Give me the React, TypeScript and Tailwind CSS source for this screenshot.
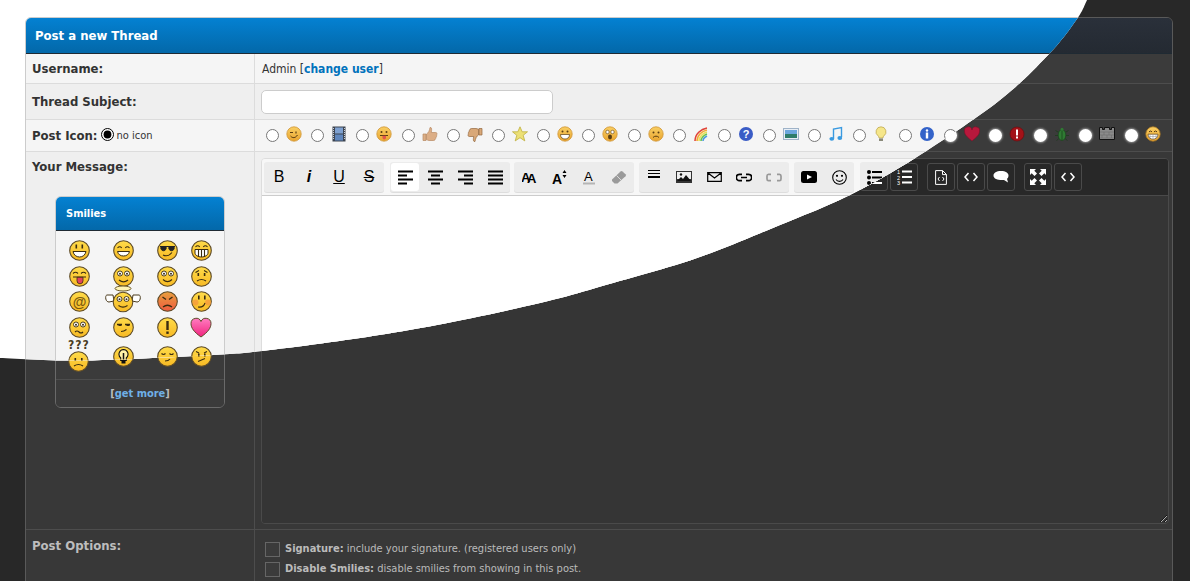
import type { ReactNode } from 'react';

const FONT = "[font-family:'DejaVu_Sans_Condensed','DejaVu_Sans',sans-serif]";

// sampled along the edge of the light part of the page
const EDGE: [number, number][] = [
  [1087, 0], [1077, 19], [1050, 53], [1000, 100], [920, 155], [850, 195], [780, 225], [697, 258],
  [613, 283], [540, 303], [437, 325], [353, 339], [262, 351], [220, 354.5], [120, 359.5], [60, 360.5], [0, 358],
];

function edgePolygon() {
  const pts: string[] = ['0px 0px'];
  for (let i = 0; i < EDGE.length - 1; i++) {
    const p0 = EDGE[Math.max(i - 1, 0)];
    const p1 = EDGE[i];
    const p2 = EDGE[i + 1];
    const p3 = EDGE[Math.min(i + 2, EDGE.length - 1)];
    for (let s = 0; s < 12; s++) {
      const t = s / 12;
      const c = (a: number, b: number, d: number, e: number) =>
        0.5 * (2 * b + (d - a) * t + (2 * a - 5 * b + 4 * d - e) * t * t + (3 * b - a - 3 * d + e) * t * t * t);
      pts.push(`${c(p0[0], p1[0], p2[0], p3[0]).toFixed(1)}px ${c(p0[1], p1[1], p2[1], p3[1]).toFixed(1)}px`);
    }
  }
  pts.push('0px 358px');
  return `polygon(${pts.join(',')})`;
}

/* ---------- post icons ---------- */

function Ic({ children }: { children: ReactNode }) {
  return <svg width="16" height="16" viewBox="0 0 16 16" className="block shrink-0">{children}</svg>;
}

function Tango({ children }: { children: ReactNode }) {
  return (
    <Ic>
      <circle cx="8" cy="8" r="7.2" fill="url(#tango)" stroke="#cf9636" strokeWidth="0.8" />
      {children}
    </Ic>
  );
}

const dot = (x: number, y: number, r = 1) => <circle cx={x} cy={y} r={r} fill="#5a3d12" />;

const POST_ICONS: ReactNode[] = [
  <Tango key="wink"><path d="M4 6.5h3M10 5.5v2" stroke="#5a3d12" strokeWidth="1.2" fill="none" /><path d="M4.5 10c2 2.4 5 2.2 7-1" stroke="#5a3d12" fill="none" /></Tango>,
  <Ic key="film"><rect x="1.5" y="0.5" width="13" height="15" fill="#3d4450" /><rect x="4" y="1.5" width="8" height="6" fill="#7ea0d0" /><rect x="4" y="8.5" width="8" height="6" fill="#5f86bd" /><path d="M2.5 2v12M13.5 2v12" stroke="#c9ccd2" strokeDasharray="1 1" /></Ic>,
  <Tango key="tongue">{dot(5.5, 6)}{dot(10.5, 6)}<path d="M4 9.5h8" stroke="#5a3d12" /><path d="M6.5 9.8h3.5v2a1.7 1.7 0 0 1-3.5 0z" fill="#e2574c" /></Tango>,
  <Ic key="up"><path d="M1 8h3v6.5H1zM4.5 8c2-1 3-3.5 3.5-6.5 1.6-.5 2 1.3 1.3 5h4.5c1.4 0 1.4 2 .6 2.5.6.8.3 1.8-.5 2.1.3.9-.1 1.6-.8 1.9 0 1-.6 1.5-1.6 1.5H7c-1.2 0-1.6-.7-2.5-.7z" fill="#dcae86" stroke="#b78a63" strokeWidth="0.7" /></Ic>,
  <Ic key="down"><g transform="rotate(180 8 8) translate(0 -1)"><path d="M1 8h3v6.5H1zM4.500 8c2-1 3-3.500 3.500-6.500 1.600-.5 2 1.300 1.300 5h4.500c1.400 0 1.400 2 .6 2.500.6.8.3 1.800-.5 2.100.3.9-.1 1.600-.8 1.900 0 1-.6 1.500-1.600 1.500H7c-1.200 0-1.600-.7-2.500-.7z" fill="#d9a878" stroke="#94683f" strokeWidth="0.7" /></g></Ic>,
  <Ic key="star"><path d="M8 .8l2.200 5h5.300l-4.300 3.500 1.600 5.600L8 11.700 3.200 14.900l1.600-5.600L.5 5.800h5.300z" fill="#ece076" stroke="#bfb03f" strokeWidth="0.8" /></Ic>,
  <Tango key="grin">{dot(5.5, 5.5)}{dot(10.5, 5.5)}<path d="M3.500 8.500h9c0 3-2 4.500-4.500 4.500s-4.500-1.500-4.500-4.500z" fill="#fff" stroke="#5a3d12" strokeWidth="0.7" /></Tango>,
  <Tango key="shock"><circle cx="5.500" cy="6" r="1.700" fill="#fff" stroke="#5a3d12" strokeWidth="0.6" /><circle cx="10.500" cy="6" r="1.700" fill="#fff" stroke="#5a3d12" strokeWidth="0.6" /><ellipse cx="8" cy="11" rx="2" ry="2.400" fill="#5a3d12" /></Tango>,
  <Tango key="sad">{dot(5.500, 6.500)}{dot(10.500, 6.500)}<path d="M5 11.500c1.500-1.800 4.500-1.800 6 0" stroke="#5a3d12" fill="none" /></Tango>,
  <Ic key="rainbow">
    <path d="M2 15C2 8 8 3 14 2" fill="none" stroke="#e0433a" strokeWidth="1.600" />
    <path d="M4 15C4 9.500 9 5 14 4" fill="none" stroke="#f3a93a" strokeWidth="1.600" />
    <path d="M6 15C6 11 10 7 14 6" fill="none" stroke="#e9e159" strokeWidth="1.600" />
    <path d="M8 15C8 12 11 9 14 8" fill="none" stroke="#6cc24f" strokeWidth="1.600" />
    <path d="M10 15C10 13 12 11 14 10" fill="none" stroke="#4f9de0" strokeWidth="1.600" />
  </Ic>,
  <Ic key="q"><circle cx="8" cy="8" r="7" fill="#3a5cc6" /><text x="8" y="12" textAnchor="middle" fontSize="11" fontWeight="700" fill="#fff" fontFamily="'Liberation Sans',sans-serif">?</text></Ic>,
  <Ic key="pic"><rect x="0.500" y="2.500" width="15" height="11" fill="#e8eef5" stroke="#9fb3c8" /><rect x="2" y="4" width="12" height="4" fill="#6ba7dd" /><rect x="2" y="8" width="12" height="4" fill="#2e7d6a" /></Ic>,
  <Ic key="music"><path d="M5.500 12.500V3l8-1.500V11" fill="none" stroke="#3a9ae0" strokeWidth="1.400" /><ellipse cx="3.800" cy="12.800" rx="2.400" ry="1.900" fill="#3a9ae0" /><ellipse cx="11.800" cy="12" rx="2.400" ry="1.900" fill="#3a9ae0" /></Ic>,
  <Ic key="bulb"><path d="M8 .8a5 5 0 0 0-3 9c.7.6 1 1.300 1 2.200h4c0-.9.3-1.600 1-2.200a5 5 0 0 0-3-9z" fill="#f5e68a" stroke="#b9a24a" strokeWidth="0.7" /><rect x="6" y="12.500" width="4" height="2.500" fill="#8a8a7a" /></Ic>,
  <Ic key="info"><circle cx="8" cy="8" r="7" fill="#3463c9" /><circle cx="8" cy="4.500" r="1.200" fill="#fff" /><rect x="6.800" y="6.500" width="2.400" height="6" fill="#fff" /></Ic>,
  <Ic key="heart"><path d="M8 15C3 11 .5 8.500.5 5.300A3.800 3.800 0 0 1 8 4a3.800 3.800 0 0 1 7.500 1.300C15.500 8.500 13 11 8 15z" fill="#b8183c" stroke="#7f1029" strokeWidth="0.6" /></Ic>,
  <Ic key="excl"><circle cx="8" cy="8" r="7" fill="#a31218" stroke="#6d0c10" strokeWidth="0.7" /><rect x="7" y="3.500" width="2" height="6" fill="#fff" /><rect x="7" y="10.500" width="2" height="2" fill="#fff" /></Ic>,
  <Ic key="bug"><ellipse cx="8" cy="9" rx="3.800" ry="5.500" fill="#2f7a33" stroke="#173d19" strokeWidth="0.6" /><path d="M8 4v10M4 6L1.500 4.500M4 9.500H1M4.500 13l-2 1.500M12 6l2.500-1.500M12 9.500h3M11.500 13l2 1.500" stroke="#173d19" strokeWidth="0.7" fill="none" /><circle cx="8" cy="3.200" r="1.500" fill="#2f7a33" /></Ic>,
  <Ic key="brick"><path d="M.5 1.500h3v2h2v-2h5v2h2v-2h3v12H.5z" fill="#8b8b8b" stroke="#111" /><path d="M1 6h14M1 9h14M1 12h14M5 6v3M10 6v3M3 9v3M8 9v3M12.500 9v3" stroke="#666" strokeWidth="0.5" /></Ic>,
  <Ic key="biggrin"><circle cx="8" cy="8" r="7.200" fill="url(#tango)" stroke="#a87725" strokeWidth="0.8" /><path d="M4 5.800q1.500-1.600 3 0M9 5.800q1.500-1.600 3 0" fill="none" stroke="#5a3d12" /><path d="M3 8.200h10c0 3.300-2.300 5-5 5s-5-1.700-5-5z" fill="#fff" stroke="#5a3d12" strokeWidth="0.7" /><path d="M5 8.500v3.800M8 8.500v4.500M11 8.500v3.800M3.500 10.500h9" stroke="#8a8a8a" strokeWidth="0.5" /></Ic>,
];

/* ---------- smilies ---------- */

function Face({ children, red }: { children?: ReactNode; red?: boolean }) {
  return (
    <svg width="21" height="21" viewBox="0 0 21 21" className="block shrink-0">
      <circle cx="10.500" cy="10.500" r="9.800" fill={red ? 'url(#angry)' : 'url(#smile)'} stroke="#5c4a28" strokeWidth="1.100" />
      {children}
    </svg>
  );
}

const ink = '#3a2c10';
const eye = (x: number, y = 8, h = 2) => <rect x={x} y={y - h / 2} width="1.600" height={h + 1} fill={ink} />;
const big = (x: number) => <g><circle cx={x} cy="7.500" r="2.500" fill="#fff" stroke={ink} strokeWidth="0.9" /><circle cx={x} cy="7.800" r="1" fill={ink} /></g>;
const line = (d: string, w = 1.100) => <path d={d} stroke={ink} strokeWidth={w} fill="none" />;

const SMILIES: ReactNode[] = [
  <Face key="1">{eye(6.500, 6, 3)}{eye(12.500, 6, 3)}<path d="M4 11.500h13c-.7 3.500-3.300 5.500-6.500 5.500S4.700 15 4 11.500z" fill="#fff" stroke={ink} /></Face>,
  <Face key="2">{line('M4.500 8q2.200-2.500 4.300 0M12.200 8q2.200-2.500 4.300 0')}<path d="M4.500 11.500h12c-.7 3-3 4.500-6 4.500s-5.300-1.500-6-4.500z" fill="#fff" stroke={ink} /></Face>,
  <Face key="3"><path d="M3 6.500h15M9 7a2.700 2.700 0 1 1-5 0zM17 7a2.700 2.700 0 1 1-5 0z" fill="#222" stroke="#222" />{line('M6 15c3 1.500 6 1 9-2.500')}</Face>,
  <Face key="4">{line('M4.500 7q2.200-2.500 4.300 0M12.200 7q2.200-2.500 4.300 0')}<path d="M4 9.500h13v3.500c0 2-3 4-6.500 4S4 15 4 13z" fill="#fff" stroke={ink} />{line('M7.500 10v6.500M10.500 10v7M13.500 10v6.500')}</Face>,
  <Face key="5">{line('M4 7.500q2.500-2.500 5 0M12 7.500q2.500-2.500 5 0')}{line('M4 11h13')}<path d="M8 11.300h6v3.500a3 3 0 0 1-6 0z" fill="#e2435e" stroke={ink} strokeWidth="0.8" /></Face>,
  <Face key="6">{big(7)}{big(14)}{line('M6 14c3 2.500 6 2.500 9 0')}</Face>,
  <Face key="7">{big(7)}{big(14)}{line('M6 13.500c3 2.800 6 2.800 9 0')}</Face>,
  <Face key="8">{eye(6.500, 8, 2)}{eye(12.800, 8, 2)}{line('M4.500 6.500L8 4.500M16.500 6.500L13 4.500M6 15q4.500-3 9 0')}</Face>,
  <Face key="9"><text x="10.500" y="15.500" textAnchor="middle" fontSize="14" fontWeight="700" fill="#7a5a10" fontFamily="'Liberation Sans',sans-serif">@</text></Face>,
  <div key="10" className="relative flex h-[21px] w-[21px] items-center justify-center">
    <svg width="36" height="28" viewBox="0 0 36 28" className="absolute left-[-7.500px] top-[-6px] block">
      <ellipse cx="18" cy="3.500" rx="8" ry="2.500" fill="#fff4b5" stroke="#6b5a2c" />
      <path d="M8 10H2C0 10 0 17 4 17l5-1zM28 10h6c2 0 2 7-2 7l-5-1z" fill="#fff" stroke="#4a3a1c" />
      <circle cx="18" cy="17" r="9.800" fill="url(#smile)" stroke="#5c4a28" strokeWidth="1.100" />
      <circle cx="14.500" cy="14" r="2.500" fill="#fff" stroke={ink} strokeWidth="0.9" /><circle cx="14.500" cy="14.300" r="1" fill={ink} />
      <circle cx="21.500" cy="14" r="2.500" fill="#fff" stroke={ink} strokeWidth="0.9" /><circle cx="21.500" cy="14.300" r="1" fill={ink} />
      <path d="M13.500 20.500c3 2.200 6 2.200 9 0" stroke={ink} strokeWidth="1.100" fill="none" />
    </svg>
  </div>,
  <Face key="11" red>{line('M5.500 6l3.500 2.500M15.500 6L12 8.500', 1.400)}{line('M6 16q4.500-3.500 9 0', 1.400)}</Face>,
  <Face key="12"><circle cx="4.500" cy="11.500" r="3" fill="#f59a3c" opacity="0.800" /><circle cx="17" cy="11.500" r="3" fill="#f59a3c" opacity="0.800" />{eye(7, 6, 3)}{eye(13, 6, 3)}{line('M7 16c3 .5 6-1 7-4')}</Face>,
  <Face key="13">{big(7)}{big(14)}{line('M6 15q2-2 4 0t4 0')}</Face>,
  <Face key="14">{line('M4 7.500h5M12 7.500h5', 1.300)}<path d="M5.500 7.500h3v1.600h-3zM13.500 7.500h3v1.600h-3z" fill={ink} />{line('M8 14.500c2 0 4-.8 5.500-2')}</Face>,
  <Face key="15"><rect x="9.300" y="4" width="2.400" height="9" fill={ink} /><rect x="9.300" y="14.500" width="2.400" height="2.400" fill={ink} /></Face>,
  <svg key="16" width="22" height="22" viewBox="0 0 22 22" className="block shrink-0"><path d="M11 21C4 16 1 12 1 7.500A5.200 5.200 0 0 1 11 5.500a5.200 5.200 0 0 1 10 2C21 12 18 16 11 21z" fill="url(#pink)" stroke="#5c4a28" /></svg>,
  <div key="17" className="flex flex-col items-center">
    <span className="text-[12px] font-bold leading-[11px] tracking-[1px] text-[#4a3c22]">???</span>
    <Face>{eye(6.500, 8, 2)}{eye(13, 8, 2)}{line('M6 15q4.500-3 9 0')}</Face>
  </div>,
  <Face key="18"><path d="M10.500 3.500a4.700 4.700 0 0 0-2.800 8.300v2.700h5.600v-2.700a4.700 4.700 0 0 0-2.800-8.300z" fill="#fff2a8" stroke="#111" strokeWidth="1.100" /><rect x="8.500" y="14.500" width="4" height="3" fill="#111" /><path d="M10.500 7v7" stroke="#111" strokeWidth="1.500" /></Face>,
  <Face key="19">{line('M4.500 7.500q2 2 4 0M12.500 7.500q2 2 4 0')}{line('M8 15c2 0 4-.6 5-2')}</Face>,
  <Face key="20">{line('M5 5.500l3 1.500M16 5.500L13 7')}{eye(7, 8.500, 2)}{eye(13, 8.500, 2)}{line('M7 15.500l7-3')}</Face>,
];

/* ---------- toolbar icons ---------- */

function Tb({ children, w = 16, h = 16 }: { children: ReactNode; w?: number; h?: number }) {
  return <svg width={w} height={h} viewBox={`0 0 ${w} ${h}`} fill="currentColor" className="block">{children}</svg>;
}

const bars = (rows: [number, number][]) => (
  <Tb w={15} h={15}>
    {rows.map(([x, w], i) => <rect key={i} x={x} y={i * 4 + 0.500} width={w} height="2" />)}
  </Tb>
);

const tbText = "[font-family:'Liberation_Sans',sans-serif] text-[16px] leading-none";

const GROUPS: { cls: string; buttons: ReactNode[] }[] = [
  {
    cls: 'mr-[6px] px-[1px]',
    buttons: [
      <span key="b" className={`${tbText} font-medium`}>B</span>,
      <span key="i" className={`${tbText} italic font-bold text-[15px]`}>i</span>,
      <span key="u" className={`${tbText} underline`}>U</span>,
      <span key="s" className={`${tbText} line-through`}>S</span>,
    ],
  },
  {
    cls: 'mr-[4px] px-[1px]',
    buttons: [
      bars([[0, 15], [0, 9], [0, 15], [0, 9]]),
      bars([[0, 15], [3, 9], [0, 15], [3, 9]]),
      bars([[0, 15], [6, 9], [0, 15], [6, 9]]),
      bars([[0, 15], [0, 15], [0, 15], [0, 15]]),
    ],
  },
  {
    cls: 'mr-[5px] px-[1px]',
    buttons: [
      <Tb key="font" w={15} h={14}>
        <text x="-1" y="12" fontSize="13" fontWeight="700" fontFamily="'Liberation Sans',sans-serif">A</text>
        <text x="5" y="13" fontSize="13" fontWeight="700" fontFamily="'Liberation Sans',sans-serif">A</text>
      </Tb>,
      <Tb key="size" w={15} h={15}>
        <text x="0" y="14" fontSize="14" fontWeight="700" fontFamily="'Liberation Sans',sans-serif">A</text>
        <path d="M10.500 3l2-3 2 3zM10.500 5l2 3 2-3z" />
      </Tb>,
      <Tb key="color" w={14} h={15}>
        <text x="2" y="11" fontSize="13" fontFamily="'Liberation Sans',sans-serif">A</text>
        <rect x="1" y="12.500" width="12" height="2" fill="#b5b5b5" />
      </Tb>,
      <Tb key="eraser" w={16} h={14}>
        <path d="M1 9.500L9.500 1.500a1.500 1.500 0 0 1 2 0l3 2.800a1.400 1.400 0 0 1 0 2L6.500 13.500H3.500L1 11z" fill="#9a9a9a" />
        <path d="M5.500 5.500l4.500 4.500" stroke="#ececec" strokeWidth="0.800" />
      </Tb>,
    ],
  },
  {
    cls: 'mr-[5px] px-[1px]',
    buttons: [
      <Tb key="hr" w={13} h={14}><rect y="0" width="12" height="1" /><rect y="3" width="12" height="1" /><rect y="6" width="12" height="2" /></Tb>,
      <Tb key="img" w={16} h={12}>
        <path fillRule="evenodd" d="M0 0h16v12H0zM2 2v8h12V8l-2.500-3-2 2.500L8 6l-4 4h0z" opacity="0" />
        <rect width="16" height="12" fill="#333" />
        <rect x="1" y="1" width="14" height="7" fill="#eee" />
        <path d="M1 10l4-4 2 2 3-4 5 6z" fill="#111" />
        <circle cx="5" cy="3.500" r="1.200" fill="#111" />
      </Tb>,
      <Tb key="mail" w={15} h={10}><path d="M.7.700h13.600v8.600H.7zM1 1l6.500 5L14 1" fill="none" stroke="currentColor" strokeWidth="1.200" /></Tb>,
      <Tb key="link" w={16} h={9}><path d="M6 1.300H3.500a3.200 3.200 0 0 0 0 6.400H6M10 1.300h2.500a3.200 3.200 0 0 1 0 6.400H10M5 4.500h6" fill="none" stroke="currentColor" strokeWidth="1.700" /></Tb>,
      <Tb key="unlink" w={16} h={9}><path d="M5 1.300H2.500C1.500 1.300 1 2 1 3v3c0 1 .5 1.700 1.500 1.700H5M11 1.300h2.500C14.500 1.300 15 2 15 3v3c0 1-.5 1.700-1.500 1.700H11" fill="none" stroke="#999" strokeWidth="1.700" /></Tb>,
    ],
  },
  {
    cls: 'mr-[6px] px-[1px]',
    buttons: [
      <Tb key="yt" w={16} h={12}><rect width="16" height="12" rx="2.500" className="fill-black" /><path d="M6 3.500l5 2.500-5 2.500z" fill="#fff" /></Tb>,
      <Tb key="smile" w={15} h={15}><circle cx="7.500" cy="7.500" r="6.800" fill="none" stroke="currentColor" strokeWidth="1.100" /><circle cx="5" cy="5.800" r="1.100" /><circle cx="10" cy="5.800" r="1.100" /><path d="M4 9.500c1.500 2.500 5.500 2.500 7 0" fill="none" stroke="currentColor" strokeWidth="1.100" /></Tb>,
    ],
  },
  {
    cls: 'mr-[9px]',
    buttons: [
      <Tb key="ul" w={15} h={15}><circle cx="2" cy="2" r="2" /><circle cx="2" cy="7.500" r="2" /><circle cx="2" cy="13" r="2" /><rect x="5" y="1" width="10" height="2" /><rect x="5" y="6.500" width="10" height="2" /><rect x="5" y="12" width="10" height="2" /></Tb>,
      <Tb key="ol" w={15} h={16}>
        <text x="0" y="5" fontSize="5.500" fontFamily="'Liberation Sans',sans-serif">1</text>
        <text x="0" y="10.500" fontSize="5.500" fontFamily="'Liberation Sans',sans-serif">2</text>
        <text x="0" y="16" fontSize="5.500" fontFamily="'Liberation Sans',sans-serif">3</text>
        <rect x="5" y="1.500" width="10" height="2" /><rect x="5" y="7" width="10" height="2" /><rect x="5" y="12.500" width="10" height="2" />
      </Tb>,
    ],
  },
  {
    cls: 'mr-[9px]',
    buttons: [
      <Tb key="src" w={12} h={15}><path d="M.6.600h7l3.800 3.800v10H.6zM7.500.600v4h3.800M4.500 7L3 9l1.500 2M7.500 7L9 9l-1.500 2" fill="none" stroke="currentColor" strokeWidth="1" /></Tb>,
      <Tb key="code" w={14} h={10}><path d="M4.500 1L1 5l3.500 4M9.500 1L13 5l-3.500 4" fill="none" stroke="currentColor" strokeWidth="1.500" /></Tb>,
      <Tb key="quote" w={16} h={14}><path d="M8 1c4.500 0 7.500 1.800 7.500 4.500 0 1.500-.6 2.500-1.500 3.300l1 3.700-4-2.500C6 10.500.5 9.300.5 5.500.5 2.800 3.500 1 8 1z" /></Tb>,
    ],
  },
  {
    cls: '',
    buttons: [
      <Tb key="max" w={16} h={16}><path d="M0 0h6L4.300 1.700 7 4.500 4.500 7 1.700 4.300 0 6zM16 0v6l-1.700-1.700L11.500 7 9 4.500l2.700-2.800L10 0zM0 16v-6l1.700 1.700L4.500 9 7 11.500l-2.700 2.800L6 16zM16 16h-6l1.700-1.700L9 11.500 11.500 9l2.800 2.700L16 10z" /></Tb>,
      <Tb key="code2" w={14} h={10}><path d="M4.500 1L1 5l3.500 4M9.500 1L13 5l-3.500 4" fill="none" stroke="currentColor" strokeWidth="1.500" /></Tb>,
    ],
  },
];

/* ---------- the page, once per theme ---------- */

function Page({ dark }: { dark: boolean }) {
  const label = `text-[13px] font-bold ${dark ? 'text-[#bdbdbd]' : 'text-[#333333]'}`;
  const line1 = dark ? 'border-[#4d4d4d]' : 'border-[#dcdcdc]';
  const rowA = dark ? 'bg-[#3b3b3b]' : 'bg-[#f5f5f5]';
  const rowB = dark ? 'bg-[#383838]' : 'bg-[#efefef]';
  const head = dark ? 'bg-gradient-to-b from-[#2a303a] to-[#242a32]' : 'bg-gradient-to-b from-[#0481d2] to-[#0368a9]';

  return (
    <div className={`${FONT} h-[581px] overflow-hidden pl-[25px] pr-[17px] pt-[17px] ${dark ? 'bg-[#282828]' : 'bg-white'}`}>
      <div className={`overflow-hidden rounded-t-[6px] border ${dark ? 'border-[#595959]' : 'border-[#cccccc]'}`}>
        <div className={`h-[36px] border-b border-[#1f2a33] pl-[9px] text-[13px] font-bold leading-[35px] ${head} ${dark ? 'text-[#dddddd]' : 'text-white'}`}>
          Post a new Thread
        </div>

        <div className={`flex h-[30px] border-b ${line1} ${rowA}`}>
          <div className={`w-[229px] shrink-0 border-r ${line1} pl-[6px] leading-[30px] ${label}`}>Username:</div>
          <div className={`pl-[7px] text-[12px] leading-[31px] ${dark ? 'text-[#bbbbbb]' : 'text-[#333333]'}`}>
            Admin [<a className={`font-bold ${dark ? 'text-[#6fb0e6]' : 'text-[#0072bc]'}`}>change user</a>]
          </div>
        </div>

        <div className={`flex h-[36px] border-b ${line1} ${rowB}`}>
          <div className={`w-[229px] shrink-0 border-r ${line1} pl-[6px] leading-[36px] ${label}`}>Thread Subject:</div>
          <div className="pl-[6px] pt-[6px]">
            <input type="text" className={`block h-[24px] w-[292px] rounded-[5px] border ${dark ? 'border-[#555555] bg-[#333333]' : 'border-[#cccccc] bg-white'}`} />
          </div>
        </div>

        <div className={`flex h-[32px] border-b ${line1} ${rowA}`}>
          <div className={`flex w-[229px] shrink-0 items-center border-r ${line1} pl-[6px]`}>
            <span className={label}>Post Icon:</span>
            <input type="radio" defaultChecked className="ml-[3px] mt-[-2px] h-[13px] w-[13px] accent-black" />
            <span className={`ml-[3px] mt-[1px] text-[11px] ${dark ? 'text-[#bbbbbb]' : 'text-[#333333]'}`}>no icon</span>
          </div>
          <div className="flex items-center pl-[11px]">
            {POST_ICONS.map((icon, i) => (
              <div key={i} className="flex w-[45.200px] shrink-0 items-center gap-[7px]">
                {dark ? (
                  <span className="h-[13px] w-[13px] rounded-full bg-white shadow-[0_0_2px_1px_#8a8a8a]" />
                ) : (
                  <input type="radio" className="m-0 h-[13px] w-[13px]" />
                )}
                <div className="mt-[-3px]">{icon}</div>
              </div>
            ))}
          </div>
        </div>

        <div className={`flex h-[378px] border-b ${line1} ${rowB}`}>
          <div className={`w-[229px] shrink-0 border-r ${line1} pl-[6px] pt-[6px]`}>
            <div className={`h-[17px] leading-[17px] ${label}`}>Your Message:</div>
            <div className={`ml-[23px] mt-[21px] h-[212px] w-[170px] overflow-hidden rounded-[6px] border ${dark ? 'border-[#6a6a6a]' : 'border-[#cccccc]'}`}>
              <div className={`h-[34px] border-b border-[#1f2a33] pl-[10px] text-[11px] font-bold leading-[33px] ${head} ${dark ? 'text-[#dddddd]' : 'text-white'}`}>
                Smilies
              </div>
              <div className={`h-[149px] border-b pl-[1px] pt-[7px] ${line1} ${rowA}`}>
                <div className="grid grid-cols-[44px_44px_44px_24px] grid-rows-[25.500px_25.500px_25.500px_25.500px_32px]">
                  {SMILIES.map((s, i) => (
                    <div key={i} className="flex items-center justify-center">{s}</div>
                  ))}
                </div>
              </div>
              <div className={`text-center text-[11px] font-bold leading-[27px] ${rowA}`}>
                <span className={dark ? 'text-[#bbbbbb]' : 'text-[#333333]'}>[</span>
                <a className={dark ? 'text-[#6fb0e6]' : 'text-[#0072bc]'}>get more</a>
                <span className={dark ? 'text-[#bbbbbb]' : 'text-[#333333]'}>]</span>
              </div>
            </div>
          </div>

          <div className="min-w-0 flex-1 pl-[6px] pr-[3px] pt-[6px]">
            <div className={`flex h-[366px] flex-col overflow-hidden rounded-[4px] border ${dark ? 'border-[#4a4a4a]' : 'border-[#dddddd]'}`}>
              <div className={`flex h-[37px] shrink-0 border-b pl-[2px] pt-[3px] ${dark ? 'border-[#4a4a4a] bg-[#282828] text-white' : 'border-[#cccccc] bg-[#f7f7f7] text-black'}`}>
                {GROUPS.map((g, gi) => (
                  <div key={gi} className={`flex h-[30px] gap-[2px] rounded-[3px] py-[1px] ${g.cls} ${dark ? '' : 'bg-[#ececec] shadow-[0_1px_0_#dddddd]'}`}>
                    {g.buttons.map((b, bi) => (
                      <div
                        key={bi}
                        className={`flex h-[28px] w-[28px] items-center justify-center rounded-[3px] ${dark ? 'border border-[#4a4a4a]' : ''} ${!dark && gi === 1 && bi === 0 ? 'bg-white' : ''}`}
                      >
                        {b}
                      </div>
                    ))}
                  </div>
                ))}
              </div>
              <textarea className={`block min-h-0 w-full flex-1 ${dark ? 'bg-[#353535] text-[#dddddd]' : 'bg-white text-black'}`} />
            </div>
          </div>
        </div>

        <div className={`flex h-[60px] ${rowB}`}>
          <div className={`w-[229px] shrink-0 border-r ${line1} pl-[6px] pt-[7px] leading-[17px] ${label}`}>Post Options:</div>
          <div className={`pl-[10px] pt-[9px] text-[11px] ${dark ? 'text-[#bbbbbb]' : 'text-[#333333]'}`}>
            <label className="flex h-[20px] items-center gap-[5px]">
              <span className={`h-[15px] w-[15px] border ${dark ? 'border-[#666666] bg-[#3b3b3b]' : 'border-[#999999] bg-white'}`} />
              <span><b>Signature:</b> include your signature. (registered users only)</span>
            </label>
            <label className="flex h-[20px] items-center gap-[5px]">
              <span className={`h-[15px] w-[15px] border ${dark ? 'border-[#666666] bg-[#3b3b3b]' : 'border-[#999999] bg-white'}`} />
              <span><b>Disable Smilies:</b> disable smilies from showing in this post.</span>
            </label>
          </div>
        </div>
      </div>
    </div>
  );
}

export default function App() {
  return (
    <div className="relative h-[581px] w-[1190px] overflow-hidden">
      <svg className="absolute h-0 w-0">
        <defs>
          <linearGradient id="tango" x1="0" y1="0" x2="0" y2="1"><stop offset="0" stopColor="#f9cf63" /><stop offset="1" stopColor="#e9a42f" /></linearGradient>
          <linearGradient id="smile" x1="0" y1="0" x2="0" y2="1"><stop offset="0" stopColor="#ffdc4a" /><stop offset="1" stopColor="#f7b924" /></linearGradient>
          <linearGradient id="angry" x1="0" y1="0" x2="0" y2="1"><stop offset="0" stopColor="#e8a03e" /><stop offset="1" stopColor="#ef5a40" /></linearGradient>
          <linearGradient id="pink" x1="0" y1="0" x2="0" y2="1"><stop offset="0" stopColor="#ff7cc0" /><stop offset="1" stopColor="#f0247f" /></linearGradient>
        </defs>
      </svg>
      <Page dark />
      {/* theme switch wipe: the light page sits above the dark one */}
      <div className="absolute inset-0" style={{ clipPath: edgePolygon() }}>
        <Page dark={false} />
      </div>
    </div>
  );
}
